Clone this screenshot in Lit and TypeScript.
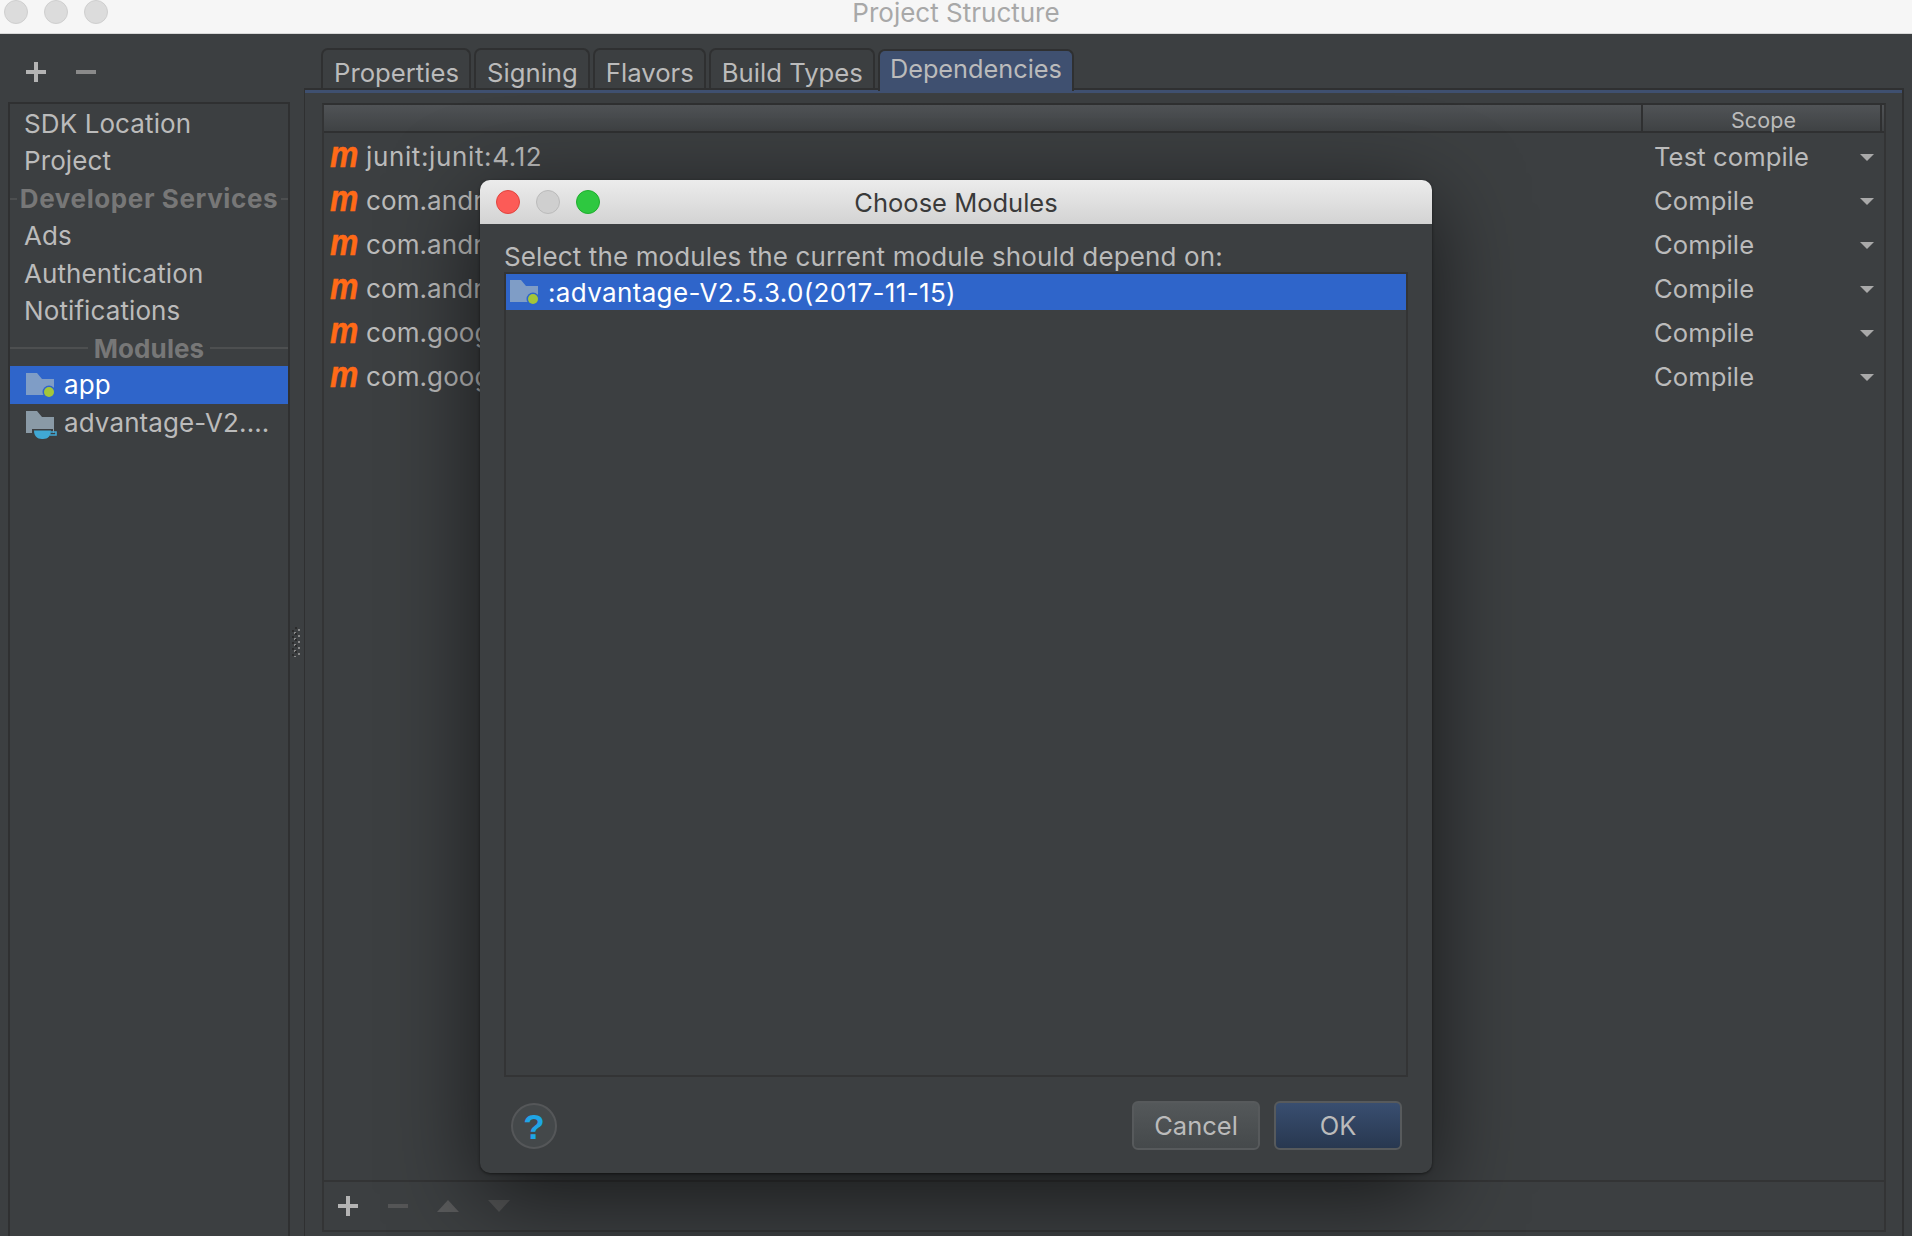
import { LitElement, html, css, svg } from "lit";
import { customElement } from "lit/decorators.js";

const deps = [
  ["junit:junit:4.12", "Test compile"],
  ["com.android", "Compile"],
  ["com.android", "Compile"],
  ["com.android", "Compile"],
  ["com.google", "Compile"],
  ["com.google", "Compile"],
];
const tabs = ["Properties", "Signing", "Flavors", "Build Types"];

const folder = (fill: string, badge: unknown) => html`<svg class="folder" width="32" height="30" viewBox="0 0 32 30">
  <path d="M0 0H11L16 6H28V22H0Z" fill=${fill}></path>${badge}</svg>`;
const dot = svg`<circle cx="23" cy="19" r="6.5" fill="#2f65ca"></circle><circle cx="23" cy="19" r="5" fill="#a4c639"></circle>`;
const cup = svg`<path d="M6 18H27V22H6Z" fill="#3c3f41"></path><path d="M8 19.5H25C25 25 22 28 17 28H16C11 28 8 25 8 19.5Z" fill="#40a8d4"></path><path d="M25 21H30V24H24" fill="none" stroke="#40a8d4" stroke-width="1.6"></path>`;

@customElement("app-root")
export class AppRoot extends LitElement {
  static styles = css`
    :host { display: block; position: relative; width: 1912px; height: 1236px; overflow: hidden; background: #3c3f41; color: #bbbbbb; font: 26px Inter, "Liberation Sans", sans-serif; letter-spacing: .1px; }
    .titlebar { height: 33px; display: grid; grid-template-columns: 1fr auto 1fr; background: #f6f6f6; border-bottom: 1px solid #d8d8d8; box-sizing: content-box; color: #a8a8a8; line-height: 26px; letter-spacing: 0; }
    .lights { display: flex; gap: 16px; padding-left: 4px; }
    .light { width: 24px; height: 24px; border-radius: 50%; background: #dcdcdc; border: 1px solid #cfcfcf; box-sizing: border-box; }
    .body { display: flex; height: 1202px; }
    .side { width: 282px; margin-left: 8px; flex: none; display: flex; flex-direction: column; }
    .side-tools { height: 68px; flex: none; display: flex; align-items: center; gap: 30px; padding: 8px 0 0 18px; box-sizing: border-box; }
    .list { flex: 1; border: solid #2f3031; border-width: 2px 2px 0; }
    .item { height: 37.43px; line-height: 39px; padding-left: 14px; white-space: nowrap; }
    .group { height: 37.43px; display: flex; align-items: center; gap: 6px; font-weight: 700; color: #777; padding-top: 2px; box-sizing: border-box; }
    .group.wide { letter-spacing: .6px; gap: 3px; }
    .group::before, .group::after { content: ""; flex: 1; height: 2px; background: #4d4f50; }
    .mod { height: 38px; display: flex; align-items: center; padding-left: 16px; gap: 6px; }
    .mod.sel { background: #2f65ca; color: #fff; }
    .folder { flex: none; margin-top: 6px; }
    .split { width: 14px; flex: none; display: flex; align-items: center; padding-left: 2px; box-sizing: border-box; }
    .grip { margin-top: 14px; }
    .main { flex: 1; margin-right: 8px; display: flex; flex-direction: column; min-width: 0; }
    .tabs { height: 57px; flex: none; display: flex; align-items: flex-end; padding-left: 17px; gap: 3px; margin-bottom: -3px; position: relative; z-index: 1; letter-spacing: 0; font-size: 25.7px; }
    .tab { height: 40px; margin-bottom: 3px; border: solid #2f3031; border-width: 2px 2px 0; border-radius: 7px 7px 0 0; padding: 0 10px 0 11px; box-sizing: border-box; line-height: 45px; }
    .tab.on { height: 42px; margin-bottom: 0; background: #3f5070; line-height: 35px; font-size: 25.3px; padding: 0 10px; }
    .panel { flex: 1; border: solid #2f3031; border-width: 2px 2px 0 1px; display: flex; flex-direction: column; min-height: 0; }
    .blue { height: 3px; background: #3f5070; flex: none; }
    .inner { flex: 1; display: flex; flex-direction: column; margin: 10px 16px 4px 17px; border: 2px solid #333435; border-top-color: #2f3031; min-height: 0; }
    .head { height: 28px; flex: none; display: flex; justify-content: flex-end; background: linear-gradient(#505356, #3f4244); border-bottom: 2px solid #2f3031; box-sizing: border-box; }
    .scope { width: 241px; margin-right: 2px; border: solid #2f3031; border-width: 0 2px; padding-left: 4px; text-align: center; font-size: 21.5px; line-height: 30px; box-sizing: border-box; }
    .rows { flex: 1; padding-top: 1px; }
    .row { height: 44px; display: flex; align-items: center; padding-left: 6px; white-space: nowrap; }
    .m { width: 36px; flex: none; font: italic 700 37px "Liberation Sans", sans-serif; color: #ff6a17; line-height: 36px; margin-top: -2px; transform: scaleX(.86); transform-origin: 0 50%; -webkit-text-stroke: .5px #ff6a17; }
    .dep { flex: 1; }
    .dep.loose { letter-spacing: .63px; }
    .sc { width: 206px; font-size: 25.6px; }
    .caret { width: 0; height: 0; border: solid transparent; border-width: 7px 7px 0; border-top-color: #a9a9a9; margin: 2px 10px 0 0; }
    .tools { height: 50px; flex: none; border-top: 2px solid #333435; display: flex; align-items: center; padding-left: 14px; gap: 30px; box-sizing: border-box; }
    .plus { width: 20px; height: 20px; flex: none; }
    .tri-u, .tri-d { width: 0; height: 0; border: solid transparent; border-width: 0 11px 12px; border-bottom-color: #5a5b5c; margin-left: -1px; }
    .tri-d { border-width: 12px 11px 0; border-top-color: #545556; }
    .dialog { position: absolute; left: 480px; top: 180px; width: 952px; height: 993px; border-radius: 10px; background: #3c3f41; display: flex; flex-direction: column; box-shadow: 0 22px 90px rgba(0,0,0,.62), 0 1px 3px rgba(0,0,0,.5); overflow: hidden; z-index: 2; }
    .dtitle { height: 44px; flex: none; display: grid; grid-template-columns: 1fr auto 1fr; align-items: center; background: linear-gradient(#ececec, #d3d3d3); color: #3a3a3a; font-size: 25.5px; letter-spacing: 0; }
    .dl { display: flex; gap: 16px; padding-left: 16px; margin-top: -1px; }
    .dl i { width: 24px; height: 24px; border-radius: 50%; display: block; box-sizing: border-box; }
    .r { background: #fc5b57; border: 1px solid #e0443e; } .g { background: #cfcfcf; border: 1px solid #bbb; } .v { background: #2ec840; border: 1px solid #1fae2e; }
    .dbody { flex: 1; display: flex; flex-direction: column; padding: 16px 24px 0; min-height: 0; }
    .label { height: 32px; flex: none; line-height: 34px; letter-spacing: .12px; }
    .mlist { flex: 1; border: 2px solid #333435; }
    .mrow { height: 36px; background: #2f65ca; color: #fff; display: flex; align-items: center; padding-left: 4px; gap: 6px; letter-spacing: .35px; }
    .foot { height: 96px; flex: none; display: flex; align-items: center; padding: 1px 30px 0 31px; gap: 14px; box-sizing: border-box; font-size: 25.5px; letter-spacing: 0; }
    .help { width: 46px; height: 46px; border-radius: 50%; border: 2px solid #555759; background: #44484a; color: #1fa5e6; font: 700 35px "Liberation Sans", sans-serif; text-align: center; line-height: 44px; box-sizing: border-box; margin-right: auto; }
    .btn { width: 128px; height: 49px; border: 2px solid #575a5c; border-radius: 6px; box-sizing: border-box; display: grid; place-items: center; background: linear-gradient(#54585a, #45494b); }
    .btn.ok { background: linear-gradient(#394e70, #283850); }
  `;

  plus(c: string) {
    return html`<svg class="plus" viewBox="0 0 20 20"><path d="M8 0h4v8h8v4h-8v8H8v-8H0V8h8z" fill=${c}></path></svg>`;
  }
  minus(c: string) {
    return html`<svg class="plus" viewBox="0 0 20 20"><path d="M0 8h20v4H0z" fill=${c}></path></svg>`;
  }

  render() {
    return html`
      <div class="titlebar">
        <div class="lights"><div class="light"></div><div class="light"></div><div class="light"></div></div>
        <div>Project Structure</div><div></div>
      </div>
      <div class="body">
        <div class="side">
          <div class="side-tools">${this.plus("#b4b4b4")}${this.minus("#8a8a8a")}</div>
          <div class="list">
            <div class="item">SDK Location</div>
            <div class="item">Project</div>
            <div class="group wide">Developer Services</div>
            <div class="item">Ads</div>
            <div class="item">Authentication</div>
            <div class="item">Notifications</div>
            <div class="group">Modules</div>
            <div class="mod sel">${folder("#7f9dc6", dot)}<span>app</span></div>
            <div class="mod">${folder("#8a9aa6", cup)}<span>advantage-V2....</span></div>
          </div>
        </div>
        <div class="split">
          <svg class="grip" width="9" height="30" viewBox="0 0 9 30">
            ${[0, 6, 12, 18, 24].map((y) => svg`<rect x="0" y=${y + 3} width="2" height="2" fill="#2b2b2b"></rect><rect x="3" y=${y} width="2" height="2" fill="#2b2b2b"></rect><rect x="2" y=${y + 5} width="2" height="2" fill="#888"></rect><rect x="6" y=${y + 2} width="2" height="2" fill="#888"></rect>`)}
          </svg>
        </div>
        <div class="main">
          <div class="tabs">
            ${tabs.map((t) => html`<div class="tab">${t}</div>`)}
            <div class="tab on">Dependencies</div>
          </div>
          <div class="panel">
            <div class="blue"></div>
            <div class="inner">
              <div class="head"><div class="scope">Scope</div></div>
              <div class="rows">
                ${deps.map(([d, s], i) => html`<div class="row"><span class="m">m</span><span class="dep ${i === 0 ? "loose" : ""}">${d}</span><span class="sc">${s}</span><span class="caret"></span></div>`)}
              </div>
              <div class="tools">${this.plus("#b4b4b4")}${this.minus("#555657")}<div class="tri-u"></div><div class="tri-d"></div></div>
            </div>
          </div>
        </div>
      </div>
      <div class="dialog">
        <div class="dtitle">
          <div class="dl"><i class="r"></i><i class="g"></i><i class="v"></i></div>
          <div>Choose Modules</div><div></div>
        </div>
        <div class="dbody">
          <div class="label">Select the modules the current module should depend on:</div>
          <div class="mlist">
            <div class="mrow">${folder("#7f9dc6", dot)}<span>:advantage-V2.5.3.0(2017-11-15)</span></div>
          </div>
        </div>
        <div class="foot">
          <div class="help">?</div>
          <div class="btn">Cancel</div>
          <div class="btn ok">OK</div>
        </div>
      </div>
    `;
  }
}
